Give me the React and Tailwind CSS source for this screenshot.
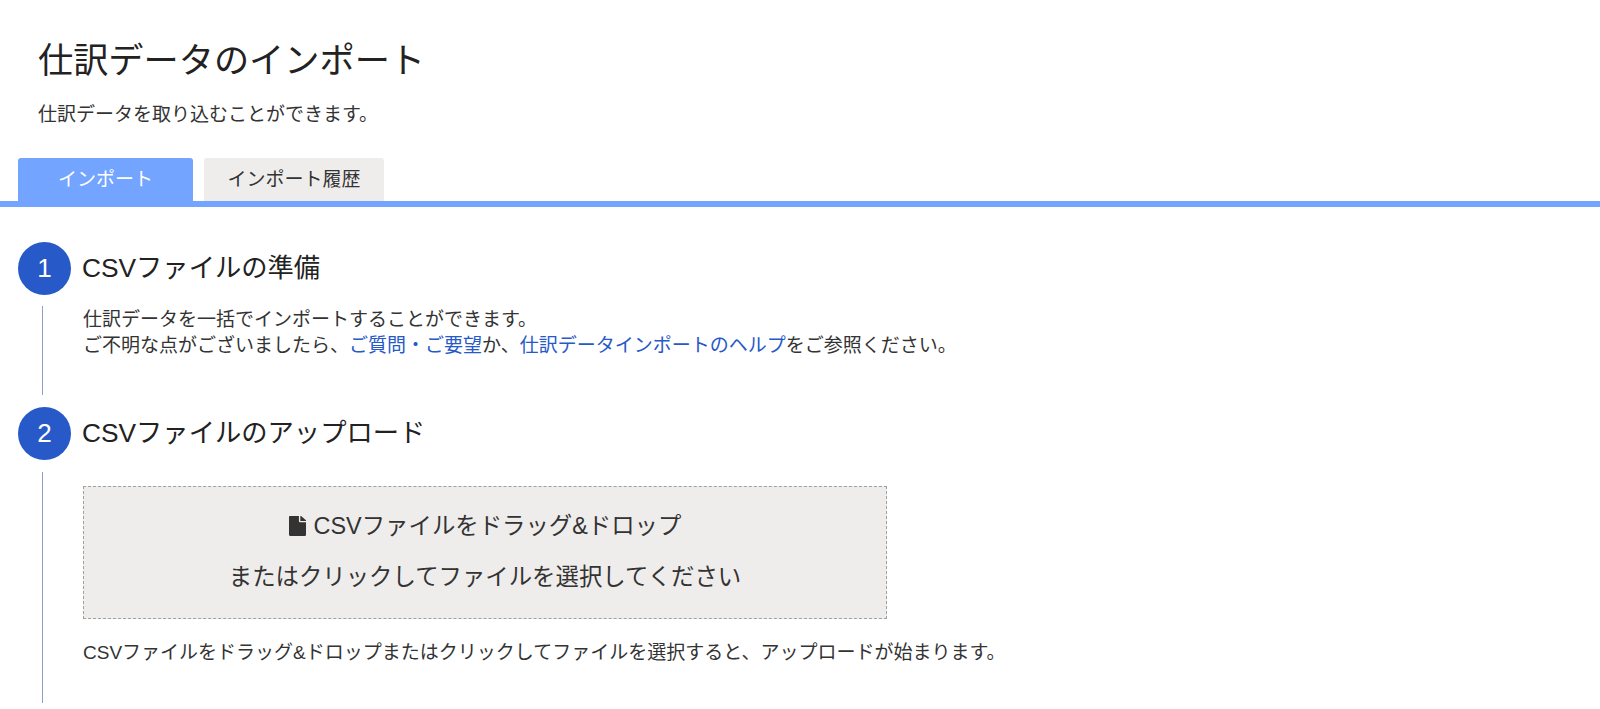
const FONT = "font-['Liberation_Sans','Noto_Sans_CJK_JP',sans-serif]";

function FileIcon() {
  return (
    <svg viewBox="0 0 384 512" preserveAspectRatio="none" className="h-[20px] w-[17px] mr-[8px] fill-[#333333] shrink-0">
      <path d="M224 136V0H24C10.7 0 0 10.7 0 24v464c0 13.3 10.7 24 24 24h336c13.3 0 24-10.7 24-24V160H248c-13.2 0-24-10.8-24-24zm160-14.1v6.1H256V0h6.1c6.4 0 12.5 2.5 17 7l97.9 98c4.5 4.5 7 10.6 7 16.9z" />
    </svg>
  );
}

function StepHeader({ n, title }) {
  return (
    <div className="flex items-center h-[53px]">
      <div className="w-[53px] h-[53px] rounded-full bg-[#2759c8] text-white text-[26px] flex items-center justify-center shrink-0">{n}</div>
      <div className="ml-[11px] pb-[2px] text-[26.3px] leading-[36px] text-[#222222]">{title}</div>
    </div>
  );
}

export default function App() {
  return (
    <div className={`${FONT} w-[1600px] h-[709px] overflow-hidden bg-white text-[#333333]`}>
      <div className="pl-[38px] pt-[38px]">
        <h1 className="text-[35.2px] leading-[46px] text-[#222222]">仕訳データのインポート</h1>
        <p className="mt-[18px] text-[19px] leading-[26px]">仕訳データを取り込むことができます。</p>
      </div>
      <div className="mt-[30px] flex items-end gap-[11px] pl-[18px] h-[43px]">
        <div className="w-[175px] h-[43px] pt-[1px] rounded-t-[3px] bg-[#73a4ff] text-white text-[19px] flex items-center justify-center">インポート</div>
        <div className="w-[180px] h-[43px] pt-[1px] rounded-t-[3px] bg-[#efedec] text-[19px] flex items-center justify-center">インポート履歴</div>
      </div>
      <div className="h-[6px] bg-[#73a4ff]" />
      <div className="pl-[18px] pt-[35px]">
        <StepHeader n="1" title="CSVファイルの準備" />
        <div className="flex mt-[11px] h-[89px]">
          <div className="ml-[24px] w-px bg-[#8fa0c8]" />
          <div className="ml-[40px] text-[19px] leading-[26px] pt-[1px]">
            <p>仕訳データを一括でインポートすることができます。</p>
            <p>
              ご不明な点がございましたら、<a className="text-[#2759c8]">ご質問・ご要望</a>か、<a className="text-[#2759c8]">仕訳データインポートのヘルプ</a>をご参照ください。
            </p>
          </div>
        </div>
        <div className="mt-[12px]">
          <StepHeader n="2" title="CSVファイルのアップロード" />
        </div>
        <div className="flex mt-[12px] h-[231px]">
          <div className="ml-[24px] w-px bg-[#8fa0c8]" />
          <div className="ml-[40px] pt-[14px]">
            <div className="w-[804px] h-[133px] pb-[2px] border border-dashed border-[#a0a0a0] bg-[#efedec] flex flex-col items-center justify-center text-[23.4px] leading-[51px]">
              <div className="flex items-center"><FileIcon />CSVファイルをドラッグ&amp;ドロップ</div>
              <div>またはクリックしてファイルを選択してください</div>
            </div>
            <p className="mt-[21px] text-[19px] leading-[26px]">CSVファイルをドラッグ&amp;ドロップまたはクリックしてファイルを選択すると、アップロードが始まります。</p>
          </div>
        </div>
      </div>
    </div>
  );
}
